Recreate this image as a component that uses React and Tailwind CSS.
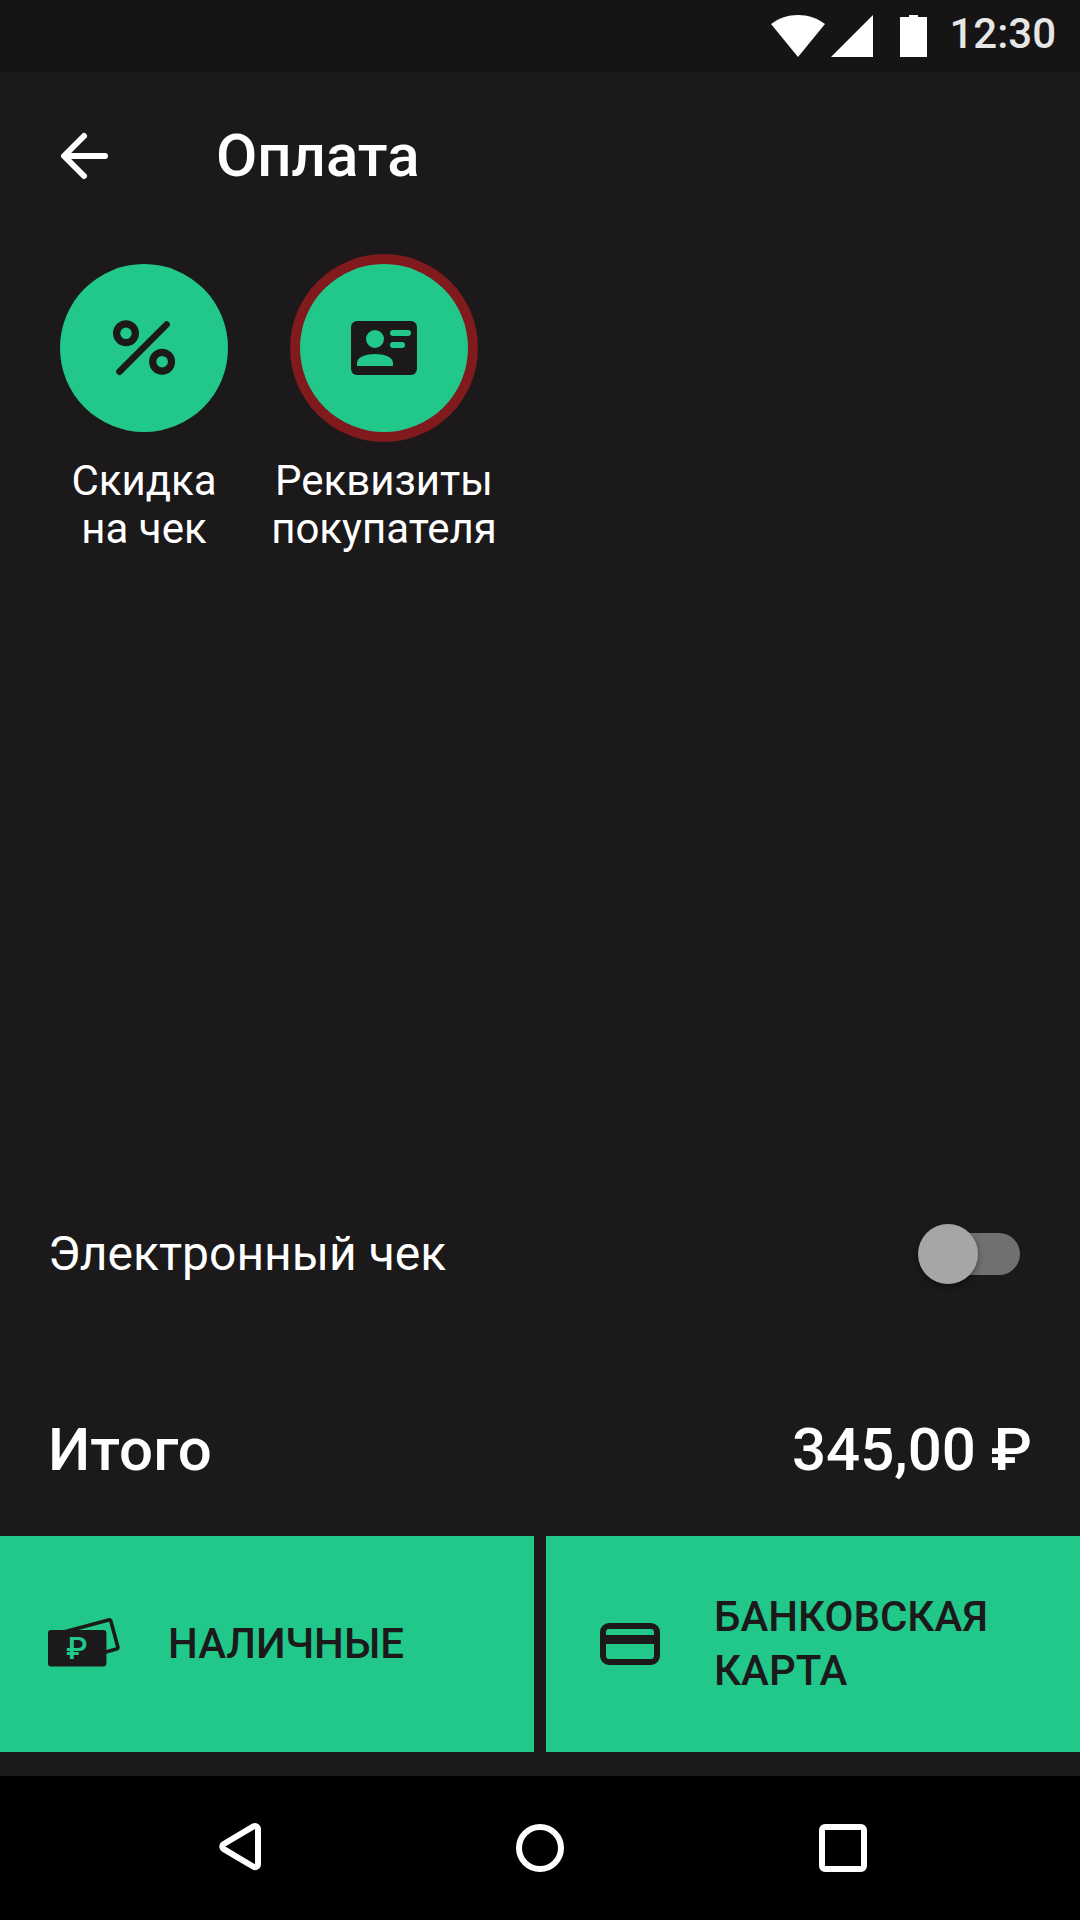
import React, { useState } from 'react';

function StatusBar() {
  return (
    <div className="flex h-[72px] items-start justify-end bg-[#161415] pt-[15px] pr-6">
      <svg className="h-[42px] w-[54px]" viewBox="0 0 54 42" fill="#fff" aria-hidden="true">
        <path d="M27 42 0 9C8 3 17 0 27 0s19 3 27 9Z" />
      </svg>
      <svg className="ml-[6px] h-[42px] w-[42px]" viewBox="0 0 42 42" fill="#fff" aria-hidden="true">
        <path d="M42 0v42H0Z" />
      </svg>
      <svg className="ml-[27px] h-[42px] w-[27px]" viewBox="0 0 27 42" fill="#fff" aria-hidden="true">
        <path d="M9 0h9v2h9v40H0V2h9Z" />
      </svg>
      <span className="ml-[22px] text-[42px] leading-[38px] font-medium text-[#e6e6e6]">12:30</span>
    </div>
  );
}

function BackIcon() {
  return (
    <svg
      className="h-[72px] w-[72px]"
      viewBox="0 0 72 72"
      fill="none"
      stroke="#fff"
      strokeWidth="6"
      strokeLinecap="round"
      strokeLinejoin="round"
      aria-hidden="true"
    >
      <path d="M36 16 16 36l20 20M17 36h40" />
    </svg>
  );
}

function PercentIcon() {
  return (
    <svg className="h-[72px] w-[72px]" viewBox="0 0 72 72" fill="none" stroke="#1b191a" aria-hidden="true">
      <circle cx="18" cy="21.3" r="9.4" strokeWidth="7.2" />
      <circle cx="54.1" cy="49.7" r="9.4" strokeWidth="7.2" />
      <path d="M11.5 59.7 58.6 12.5" strokeWidth="6.6" strokeLinecap="round" />
    </svg>
  );
}

function ContactIcon() {
  return (
    <svg className="h-[72px] w-[72px]" viewBox="0 0 72 72" aria-hidden="true">
      <rect x="3" y="9" width="66" height="54" rx="6" fill="#1b191a" />
      <g fill="#22c78a">
        <circle cx="27" cy="27" r="9" />
        <path d="M9 54v-3c0-6 9-9 18-9s18 3 18 9v3Z" />
        <rect x="42" y="18" width="21" height="6" rx="3" />
        <rect x="42" y="30" width="15" height="6" rx="3" />
      </g>
    </svg>
  );
}

function CashIcon() {
  return (
    <svg className="h-[72px] w-[72px] shrink-0" viewBox="0 0 72 72" aria-hidden="true">
      <path
        d="M14 24.4 60.6 12q1.8-.5 2.3 1.3l6.9 25.5q.5 1.8-1.3 2.3L57 44.2"
        fill="none"
        stroke="#1b191a"
        strokeWidth="3.6"
      />
      <rect x="0" y="22" width="58.4" height="36.4" rx="3" fill="#1b191a" />
      <text x="29" y="51" textAnchor="middle" fontSize="31" fontWeight="500" fill="#22c78a">
        ₽
      </text>
    </svg>
  );
}

function BankCardIcon() {
  return (
    <svg className="h-[72px] w-[72px] shrink-0" viewBox="0 0 72 72" aria-hidden="true">
      <rect x="9" y="18" width="54" height="36" rx="6" fill="none" stroke="#1b191a" strokeWidth="6" />
      <rect x="9" y="27" width="54" height="9" fill="#1b191a" />
    </svg>
  );
}

function RoundAction({ icon, lines, highlighted }) {
  return (
    <button type="button" className="flex w-[240px] flex-col items-center gap-[25px]">
      <span
        className={
          highlighted
            ? 'flex h-[168px] w-[168px] items-center justify-center rounded-full bg-[#22c78a] ring-[10px] ring-[#801a1d]'
            : 'flex h-[168px] w-[168px] items-center justify-center rounded-full bg-[#22c78a]'
        }
      >
        {icon}
      </span>
      <span className="text-[42px] leading-[48px] text-white">
        {lines[0]}
        <br />
        {lines[1]}
      </span>
    </button>
  );
}

function PayButton({ icon, children }) {
  return (
    <button
      type="button"
      className="flex h-[216px] items-center gap-12 bg-[#22c78a] px-12 text-left text-[42px] leading-[54px] font-medium text-[#1b191a] uppercase"
    >
      {icon}
      <span>{children}</span>
    </button>
  );
}

// Rounded outside, sharp inside: a thick white outline with the black shape on top
function NavShape({ d }) {
  return (
    <svg className="h-[72px] w-[72px]" viewBox="0 0 72 72" aria-hidden="true">
      <path d={d} fill="#fff" stroke="#fff" strokeWidth="12" strokeLinejoin="round" />
      <path d={d} fill="#000" />
    </svg>
  );
}

function NavBar() {
  return (
    <nav className="mt-6 flex h-36 items-center justify-between bg-black px-[201px]">
      <button type="button" aria-label="Назад">
        <NavShape d="M24.3 34.6 54 17v35.200Z" />
      </button>
      <button type="button" aria-label="Домой">
        <svg className="h-[72px] w-[72px]" viewBox="0 0 72 72" fill="none" stroke="#fff" strokeWidth="6" aria-hidden="true">
          <circle cx="36" cy="36" r="21" />
        </svg>
      </button>
      <button type="button" aria-label="Недавние">
        <NavShape d="M18 18h36v36H18Z" />
      </button>
    </nav>
  );
}

export default function App() {
  const [electronic, setElectronic] = useState(false);

  return (
    <div className="flex min-h-screen flex-col bg-[#1b191a] font-[Roboto,sans-serif] text-white">
      <StatusBar />

      <header className="flex h-[168px] items-center gap-24 px-12">
        <button type="button" aria-label="Назад">
          <BackIcon />
        </button>
        <h1 className="text-[60px] leading-[72px] font-medium">Оплата</h1>
      </header>

      <main className="flex flex-1 flex-col">
        <div className="flex px-6 pt-6">
          <RoundAction icon={<PercentIcon />} lines={['Скидка', 'на чек']} />
          <RoundAction icon={<ContactIcon />} lines={['Реквизиты', 'покупателя']} highlighted />
        </div>

        <div className="mt-auto flex h-36 items-center justify-between pr-[60px] pl-12">
          <label htmlFor="electronic" className="text-[48px] leading-[60px]">
            Электронный чек
          </label>
          <input
            id="electronic"
            type="checkbox"
            checked={electronic}
            onChange={(e) => setElectronic(e.target.checked)}
            className="relative h-[60px] w-[102px] appearance-none before:absolute before:top-[9px] before:right-0 before:h-[42px] before:w-[84px] before:rounded-full before:bg-[#707070] after:absolute after:top-0 after:left-0 after:h-[60px] after:w-[60px] after:rounded-full after:bg-[#a6a6a6] after:shadow-[0_3px_6px_rgba(0,0,0,0.4)] checked:before:bg-[#146b4b] checked:after:left-[42px] checked:after:bg-[#22c78a]"
          />
        </div>

        <div className="mt-[38px] flex h-[172px] items-center justify-between px-12 text-[60px] leading-[72px] font-medium">
          <span>Итого</span>
          <span>345,00 ₽</span>
        </div>

        <div className="grid grid-cols-2 gap-3">
          <PayButton icon={<CashIcon />}>Наличные</PayButton>
          <PayButton icon={<BankCardIcon />}>
            Банковская
            <br />
            карта
          </PayButton>
        </div>
      </main>

      <NavBar />
    </div>
  );
}
